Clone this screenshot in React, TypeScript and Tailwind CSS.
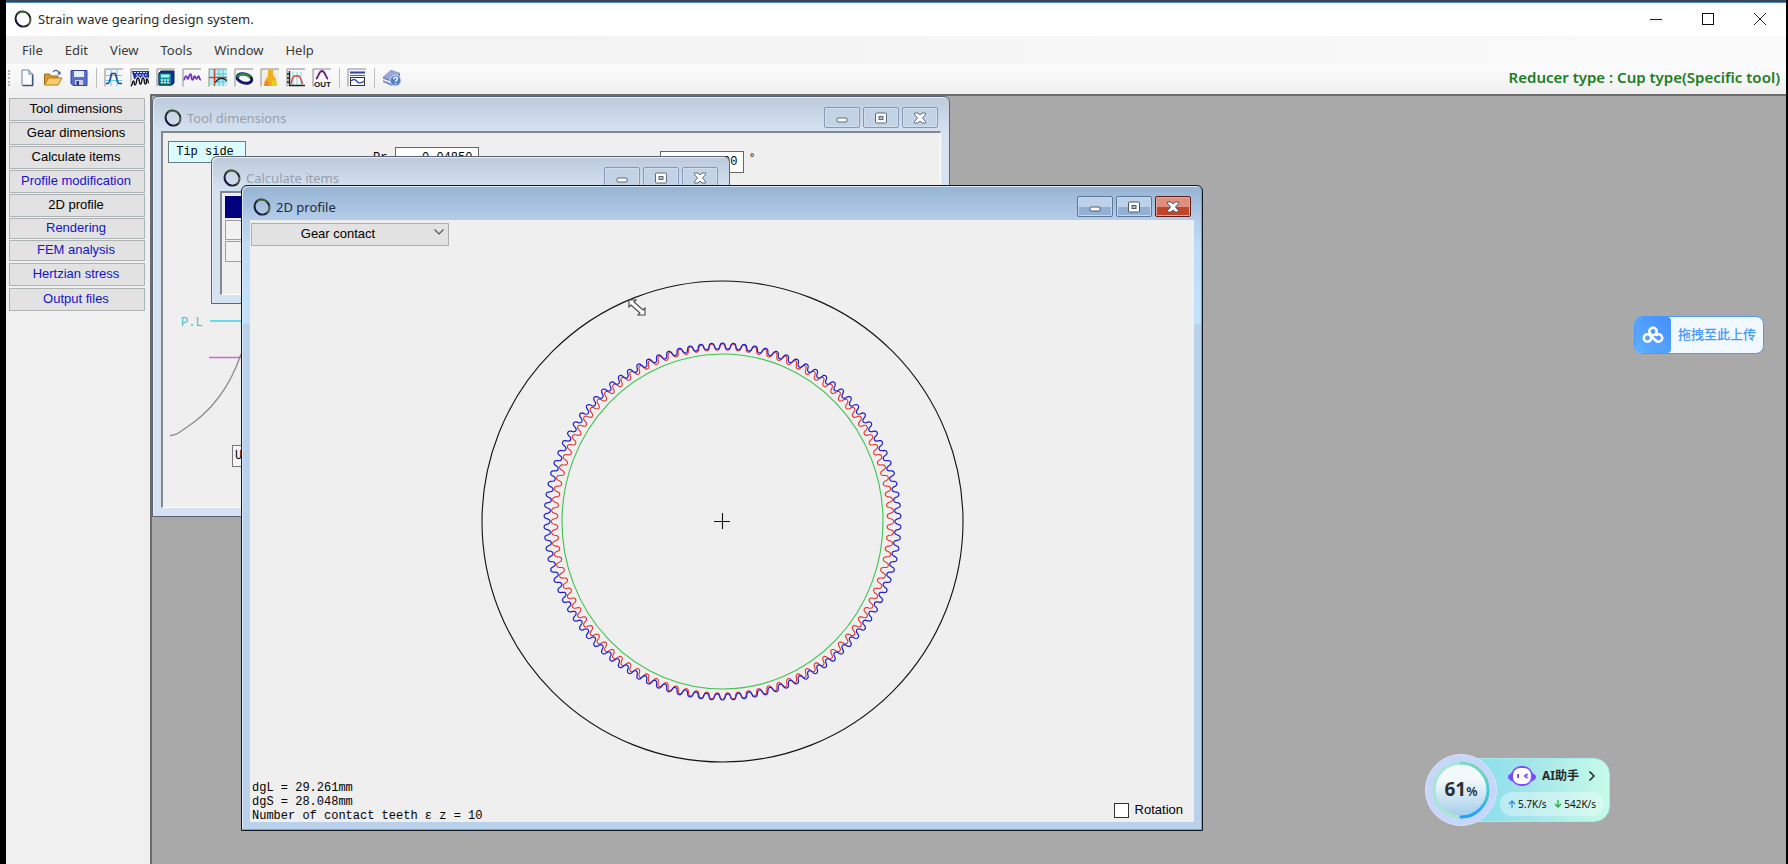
import React from 'react';

const sans = 'font-["Noto_Sans","Noto_Sans_CJK_SC",sans-serif]';
const gothic = 'font-["Liberation_Sans","Noto_Sans_CJK_JP",sans-serif]';
const mono = 'font-["Liberation_Mono","Noto_Sans_CJK_JP",monospace]';

const menus = ['File', 'Edit', 'View', 'Tools', 'Window', 'Help'];

const sideButtons = [
    { label: 'Tool dimensions', style: 'h-[23px] text-black' },
    { label: 'Gear dimensions', style: 'h-[23px] text-black' },
    { label: 'Calculate items', style: 'h-[23px] text-black' },
    { label: 'Profile modification', style: 'h-[23px] text-[#1414c8]' },
    { label: '2D profile', style: 'h-[23px] text-black' },
    { label: 'Rendering', style: 'h-[21px] text-[#1414c8]' },
    { label: 'FEM analysis', style: 'h-[21px] text-[#1414c8]' },
    { label: 'Hertzian stress', style: 'mt-px h-[23px] text-[#1414c8]' },
    { label: 'Output files', style: 'mt-px h-[23px] text-[#1414c8]' },
];

const RingIcon: React.FC = () => (
    <svg viewBox="0 0 18 18" className="w-[18px] h-[18px] shrink-0" fill="none">
        <ellipse cx="9" cy="9" rx="7.2" ry="7.8" transform="rotate(-35 9 9)" stroke="#20242c" strokeWidth="1.900" />
        <path d="M4 3.500C6.500 1.200 11 1 13.800 4" stroke="#3f6b35" strokeWidth="1.300" />
        <path d="M1.500 9c.3 3.600 3.100 7.200 6.700 7.700" stroke="#1d1650" strokeWidth="1.800" />
        <path d="M16.200 8c.3 2.500-.6 5-2.200 6.600" stroke="#8d8a52" strokeWidth="1" />
    </svg>
);

/* small framed picture used by most toolbar entries */
const Framed: React.FC<{ fill?: string; children: React.ReactNode }> = ({ fill = '#f4f6f8', children }) => (
    <svg viewBox="0 0 20 20" className="w-5 h-5" fill="none">
        <rect x="1" y="1" width="18" height="17" fill={fill} />
        <path d="M1 18.500V1h18" stroke="#8c8c8c" />
        {children}
    </svg>
);

const fileTools = [
    {
        label: 'New',
        icon: (
            <svg viewBox="0 0 20 20" className="w-5 h-5">
                <path d="M5 2h7l4 4v11.500H5z" fill="#fbfdff" stroke="#6f83a6" />
                <path d="M12 2v4h4" fill="#cfe0f4" stroke="#6f83a6" />
                <path d="M15.500 7v10.500H6" fill="none" stroke="#3f5478" strokeWidth="1.300" />
            </svg>
        ),
    },
    {
        label: 'Open',
        icon: (
            <svg viewBox="0 0 20 20" className="w-5 h-5">
                <path d="M1.500 17V6h5l1.500 2h7v3" fill="#d89b34" stroke="#a06c1c" />
                <path d="M1.500 17l4-7h13.500l-4 7z" fill="#f7cf6d" stroke="#b37c22" />
                <path d="M10 4c2-2.500 5-2 6 1" fill="none" stroke="#4a5f86" strokeWidth="1.200" />
                <path d="M17.500 3v3.500h-3.500z" fill="#4a5f86" />
            </svg>
        ),
    },
    {
        label: 'Save',
        icon: (
            <svg viewBox="0 0 20 20" className="w-5 h-5">
                <path d="M2 2.500h16v15H4l-2-2z" fill="#5a6fd0" stroke="#35469a" />
                <path d="M5 3h10v6H5z" fill="#e6edfb" />
                <path d="M6 12h8v5H6z" fill="#c9cfdf" />
                <path d="M7.500 13h2.500v4h-2.500z" fill="#2e3c82" />
            </svg>
        ),
    },
];

const viewTools = [
    {
        label: 'Tool profile',
        icon: (
            <Framed>
                <path d="M2 7.500h16M2 12.500h16M7 2v16M13 2v16" stroke="#5fd0e6" />
                <path d="M2 15.500h2c2 0 2.500-9 4-10h3c1.500 1 2 10 4 10h3" stroke="#28409a" strokeWidth="1.600" />
            </Framed>
        ),
    },
    {
        label: 'Gear profile',
        icon: (
            <Framed>
                <path d="M2 3h17v8H4z" fill="#1c2fae" />
                <path d="M4 4.500h13M6 7h11" stroke="#dfe6ff" strokeDasharray="2 1" />
                <path d="M1 18c1.500 0 1-5 2.500-5s0 4 1.500 4c2 0 1-7 3-7s.5 6 2.500 6 .5-6 2.500-6 .5 6 2.500 6 0-5 1.500-5 .5 4 2 4" stroke="#f4f6f8" strokeWidth="3.500" />
                <path d="M1 18c1.500 0 1-5 2.500-5s0 4 1.500 4c2 0 1-7 3-7s.5 6 2.500 6 .5-6 2.500-6 .5 6 2.500 6 0-5 1.500-5 .5 4 2 4" stroke="#111" strokeWidth="1.400" />
            </Framed>
        ),
    },
    {
        label: 'Calculate',
        icon: (
            <Framed>
                <path d="M3 5l2-2h13v12l-2 2H3z" fill="#17309c" stroke="#06303f" />
                <path d="M3 5h12.500v12H3z" fill="#1593a6" stroke="#06303f" />
                <path d="M5 6.500h8.500v3H5z" fill="#a8f2e6" />
                <path d="M5 12h9M5 14.500h9" stroke="#e5f7ff" strokeWidth="1.500" strokeDasharray="2 1" />
            </Framed>
        ),
    },
    {
        label: 'Modification',
        icon: (
            <Framed>
                <path d="M1.500 12c1.500 0 1-4 2.500-4s1 3 2 3 1-5 2.500-5 .5 6 2 6 1-4 2-4 1 3 2 3 1-3 2-3 .5 4 2.500 4" stroke="#7029cc" strokeWidth="1.700" />
            </Framed>
        ),
    },
    {
        label: '2D profile',
        icon: (
            <Framed fill="#b9eff5">
                <path d="M11 2v16M15 2v16M7 14h12M7 6h12" stroke="#4fc8dc" />
                <path d="M1 9.500h18M6.500 1v17" stroke="#d0452a" strokeWidth="1.500" />
                <path d="M7 14c2 0 2-3 5-3.500h3c2 .5 2 1.500 4 2" stroke="#222" strokeWidth="1.500" />
            </Framed>
        ),
    },
    {
        label: 'Rendering',
        icon: (
            <Framed>
                <ellipse cx="10.500" cy="10.500" rx="7.500" ry="4.500" transform="rotate(15 10.500 10.500)" stroke="#17156e" strokeWidth="3" />
                <path d="M3.500 9.500C5 5.500 12 5 16.500 9.500" stroke="#2d8a2f" strokeWidth="2.400" />
            </Framed>
        ),
    },
    {
        label: 'FEM analysis',
        icon: (
            <Framed fill="#f0efe6">
                <path d="M8 2h5v5l3 4 1 7H4l1-6 3-4z" fill="#f0b01e" />
                <path d="M4 18l1-5h4v5z" fill="#f5852a" />
                <path d="M12 12l4 1 1 5h-5z" fill="#e8d021" />
            </Framed>
        ),
    },
    {
        label: 'Hertzian stress',
        icon: (
            <Framed>
                <path d="M7 4v13M11 4v13M15 4v13" stroke="#7fdbe8" />
                <path d="M3.500 3v14.500H19M1 6h3M1 10h3M1 14h3" stroke="#222" strokeWidth="1.500" />
                <path d="M5 16c1-5 2-8 3.500-8h4C14 8 15 11 16.500 16" stroke="#d2442c" strokeWidth="1.500" />
            </Framed>
        ),
    },
    {
        label: 'Output files',
        icon: (
            <Framed>
                <path d="M4 11c2-1 3-8 6-8s4 7 6 8" stroke="#6b1d7c" strokeWidth="1.800" />
                <text x="2" y="18.500" fontSize="8" fontWeight="700" fill="#111" fontFamily="Liberation Sans, sans-serif">OUT</text>
            </Framed>
        ),
    },
];

const ChartTool = (
    <Framed>
        <path d="M3 4.500h15" stroke="#2c43b8" strokeWidth="2" />
        <path d="M3 7.500h15" stroke="#c43a3a" />
        <rect x="3.500" y="9.500" width="14" height="8" fill="#fff" stroke="#333" />
        <path d="M4 13c2-2 4-2 5.500 0s4 3 8 0" stroke="#2c43b8" strokeWidth="1.300" />
    </Framed>
);

const HelpTool = (
    <svg viewBox="0 0 20 20" className="w-5 h-5">
        <path d="M1 9l8-7 9 3v7l-8 6-9-4z" fill="#7484bf" />
        <path d="M1 9l8-7 9 3-8 7z" fill="#9aa7d6" />
        <path d="M1 11.500l9 3.500" stroke="#f2f4fb" strokeWidth="1.500" />
        <circle cx="13.500" cy="12.500" r="5.500" fill="#4f80d0" stroke="#dfe9fa" />
        <path d="M11.700 11.200c0-2.600 3.700-2.400 3.700-.2 0 1.300-1.800 1.400-1.800 2.700M13.600 15v1.200" fill="none" stroke="#fff" strokeWidth="1.400" />
    </svg>
);

const ToolButton: React.FC<{ label: string; children: React.ReactNode }> = ({ label, children }) => (
    <button type="button" aria-label={label} className="w-[26px] h-6 flex items-center justify-center shrink-0">
        {children}
    </button>
);

const Separator: React.FC = () => <span className="w-px h-5 mx-1 bg-[#bdbdbd] shrink-0" />;

const CaptionButtons: React.FC<{ active?: boolean }> = ({ active = false }) => {
    const base = active
        ? 'w-9 h-[21px] flex items-center justify-center rounded-[2px] border border-[#5d7797] bg-linear-to-b from-[#bdd2ea] from-50% to-[#91b0d3] to-50% shadow-[inset_0_0_0_1px_#c5d8ee]'
        : 'w-9 h-[21px] flex items-center justify-center rounded-[2px] border border-[#8499b5] bg-[#c3d3e6] shadow-[inset_0_0_0_1px_#d0deee]';
    const close = active
        ? 'w-9 h-[21px] flex items-center justify-center rounded-[2px] border border-[#5e1f18] bg-linear-to-b from-[#de8f7e] from-50% to-[#c1452b] to-50% shadow-[inset_0_0_0_1px_#e2a596]'
        : base;
    const ink = active ? '#4a5568' : '#5f6b7d';
    return (
        <div className="flex gap-[3px] pt-[10px] pr-[3px]">
            <button type="button" aria-label="Minimize" className={base}>
                <svg viewBox="0 0 14 12" className="w-[14px] h-3">
                    <rect x="2" y="6" width="10" height="4" rx="1" fill="#fff" stroke={ink} />
                </svg>
            </button>
            <button type="button" aria-label="Maximize" className={base}>
                <svg viewBox="0 0 14 12" className="w-[14px] h-3">
                    <rect x="1.500" y="1" width="11" height="10" rx="1" fill="#fff" stroke={ink} />
                    <rect x="5" y="4.500" width="4" height="3" fill="#aebfd3" stroke={ink} />
                </svg>
            </button>
            <button type="button" aria-label="Close" className={close}>
                <svg viewBox="0 0 14 12" className="w-[14px] h-3">
                    <path d="M1.500 1h3.500l2 2L9 1h3.500v1.500L9.500 6l3 3.500V11H9L7 9l-2 2H1.500V9.500l3-3.500-3-3.500z" fill="#fff" stroke={ink} />
                </svg>
            </button>
        </div>
    );
};

interface WindowProps {
    title: string;
    place: string;
    active?: boolean;
    children: React.ReactNode;
}

const ChildWindow: React.FC<WindowProps> = ({ title, place, active = false, children }) => (
    <section
        className={`absolute flex flex-col rounded-t-[6px] border px-2 pb-2 ${place} ${
            active
                ? 'border-[#101820] bg-[linear-gradient(#96b3d3_0px,#b4cdea_34px,#bfdcf7_60px,#c3e2fc_136px,#b9d1ea_140px)] shadow-[inset_-1px_-1px_0_#4cb8e0,inset_1px_1px_0_#dce9f7]'
                : 'border-[#5c6672] bg-[linear-gradient(#bccadb_0px,#d5e2f1_34px,#d5e2f1_100%)] shadow-[inset_1px_1px_0_#e4edf7]'
        }`}
    >
        <header className="h-[34px] shrink-0 flex items-start justify-between">
            <div className="flex items-center gap-[5px] pl-[3px] h-[42px]">
                <RingIcon />
                <h2 className={`${sans} text-[13px] leading-5 whitespace-nowrap ${active ? 'text-[#1c2a3c]' : 'text-[#97a0ad]'}`}>{title}</h2>
            </div>
            <CaptionButtons active={active} />
        </header>
        {children}
    </section>
);

const gearPath = (teeth: number, rx: number, ry: number, amp: number) => {
    const steps = teeth * 16;
    let d = '';
    for (let i = 0; i <= steps; i++) {
        const t = (i / 16) * Math.PI * 2;
        // tangential term rounds out the tip and root of each tooth
        const a = (t + 0.28 * Math.sin(2 * t)) / teeth;
        const r = amp * Math.cos(t);
        const x = 472.5 + (rx + r) * Math.sin(a);
        const y = 301.5 - (ry + r) * Math.cos(a);
        d += `${i ? 'L' : 'M'}${x.toFixed(2)} ${y.toFixed(2)}`;
    }
    return d + 'Z';
};

const GearDrawing: React.FC = () => (
    <svg viewBox="0 0 944 602" className="absolute inset-0 w-full h-full" fill="none" strokeWidth="1.100">
        <circle cx="472.500" cy="301.500" r="240.500" stroke="#111" />
        <ellipse cx="472.500" cy="301.500" rx="160.500" ry="167.500" stroke="#3fc04f" />
        <path d={gearPath(100, 168, 174.5, 3.2)} stroke="#e0342c" />
        <path d={gearPath(102, 175.5, 175.5, 3)} stroke="#2020c8" strokeWidth="1.200" />
        <path d="M464 301.500h16M472.500 293v16" stroke="#111" />
        <path d="M379 80h7l-2 2 9 8 2-2v7h-7l2-2-9-8-2 2z" fill="#fff" stroke="#444" />
    </svg>
);

const ToolDimensions: React.FC = () => (
    <div className={`flex-1 border-t-2 border-l-2 border-[#84888e] border-r border-b border-r-white border-b-white bg-[#efefef] ${mono} text-[12px] overflow-hidden`}>
        <div className="flex items-start h-[170px] pt-2 pl-[5px]">
            <span className="w-[78px] h-[22px] border border-[#6d7c80] bg-[#dcfdff] pr-1 text-center leading-5 text-black">Tip side</span>
            <label htmlFor="pr" className="ml-[127px] pt-[7px] pr-2 leading-5">Pr</label>
            <input id="pr" defaultValue="0.04850" className="mt-[6px] w-[84px] h-[22px] border border-[#666] bg-white px-[6px] text-right" />
            <input aria-label="Angle" defaultValue="20.000" className="ml-[181px] mt-[10px] w-[84px] h-[22px] border border-[#666] bg-white px-[6px] text-right" />
            <span className="pl-1 pt-2 leading-5">°</span>
        </div>
        <svg viewBox="0 0 100 140" className="w-[100px] h-[140px]" fill="none">
            <text x="18" y="23" fontSize="12" fill="#3dbdd0">P.L</text>
            <path d="M47 18h53" stroke="#3ed3e6" strokeWidth="1.500" />
            <path d="M46 54.500h54" stroke="#dd5fd6" strokeWidth="1.500" />
            <path d="M7 132.500c7 0 9-3 15-7C40 114 64 93 78 51" stroke="#8c8c8c" strokeWidth="1.300" />
        </svg>
        <button type="button" className="ml-[69px] mt-[2px] w-20 h-[22px] border border-[#777] bg-[#f4f4f4] pl-[2px] text-left">Update</button>
    </div>
);

const CalculateItems: React.FC = () => (
    <div className="flex-1 border-t-2 border-l-2 border-[#84888e] border-r border-b border-r-white border-b-white bg-[#efefef] p-[3px]">
        <div className="h-[22px] bg-[#00007f]" />
        <div className="mt-[2px] h-5 border border-[#a0a0a0] bg-[#f1f1f1]" />
        <div className="mt-[1px] h-[21px] border border-[#a0a0a0] bg-[#f1f1f1]" />
    </div>
);

const Profile2D: React.FC = () => (
    <div className="relative flex-1 flex flex-col justify-between bg-[#efefef]">
        <GearDrawing />
        <div className="relative mx-px w-[198px]">
            <select aria-label="View" className={`${gothic} appearance-none w-full h-[23px] border border-[#b0b0b0] bg-[#e2e2e2] pr-6 pb-[2px] text-[13px] text-center text-black`}>
                <option>Gear contact</option>
            </select>
            <svg viewBox="0 0 10 6" className="absolute right-[5px] top-[9px] w-[10px] h-[6px] pointer-events-none" fill="none">
                <path d="M.5.5L5 5 9.500.5" stroke="#555" strokeWidth="1.200" />
            </svg>
        </div>
        <footer className="relative flex justify-between items-end pl-[2px]">
            <div className={`${mono} -mb-px text-[12px] leading-[14px] text-black whitespace-pre`}>
                <p>dgL = 29.261mm</p>
                <p>dgS = 28.048mm</p>
                <p>Number of contact teeth ε z = 10</p>
            </div>
            <label className={`${gothic} flex items-center gap-[6px] pr-[11px] pb-1 text-[13px] leading-4 text-black`}>
                <input type="checkbox" className="appearance-none w-[15px] h-[15px] border border-[#333] bg-white" />
                Rotation
            </label>
        </footer>
    </div>
);

const UploadDrop: React.FC = () => (
    <button type="button" className={`absolute right-[22px] top-[220px] w-[130px] h-[38px] flex items-stretch rounded-lg border border-[#4a98fb] bg-[#f1f8ff] overflow-hidden ${sans}`}>
        <span className="w-9 flex items-center justify-center rounded-r-[4px] bg-linear-to-tr from-[#5fb0ff] to-[#448dfd]">
            <svg viewBox="0 0 22 18" className="w-[22px] h-[18px]" fill="none" stroke="#fff" strokeWidth="2.600">
                <circle cx="11" cy="5.500" r="3.700" />
                <circle cx="5.500" cy="12" r="3.700" />
                <path d="M13.800 9.500a3.700 3.700 0 1 1 0 5L8.500 9.800" />
            </svg>
        </span>
        <span className="flex-1 flex items-center justify-center text-[13px] font-medium text-[#459afc]">拖拽至此上传</span>
    </button>
);

const Assistant: React.FC = () => (
    <div className={`absolute right-[176px] bottom-[38px] flex items-center ${sans}`}>
        <div className="relative z-10 w-[72px] h-[72px] rounded-full border border-[#dbe4fc] bg-[#c6d7fa] flex items-center justify-center">
            <svg viewBox="0 0 72 72" className="absolute -inset-px w-[72px] h-[72px]" fill="none">
                <defs>
                    <linearGradient id="ball" x1="0" y1="0" x2="0" y2="1">
                        <stop offset="0.300" stopColor="#f3f9fb" />
                        <stop offset="1" stopColor="#a3cdea" />
                    </linearGradient>
                    <linearGradient id="arc" x1="0" y1="0" x2="0" y2="1">
                        <stop offset="0" stopColor="#7adcb8" />
                        <stop offset="0.600" stopColor="#45c6d2" />
                        <stop offset="1" stopColor="#1ea0fb" />
                    </linearGradient>
                </defs>
                <circle cx="36" cy="36" r="26" fill="url(#ball)" />
                <path d="M36 63a27 27 0 0 1 0-54" stroke="#a7e6cf" strokeWidth="3" />
                <path d="M36 9a27 27 0 0 1 0 54" stroke="url(#arc)" strokeWidth="3" strokeLinecap="round" />
            </svg>
            <p className="relative flex items-baseline font-bold text-[#2a2f33] text-[19px] leading-6">
                61<span className="text-[13px] font-semibold">%</span>
            </p>
        </div>
        <div className="-ml-14 w-[169px] h-16 rounded-2xl border border-[#a5ecec] bg-linear-to-r from-[#6fdcf0] via-[#a3e4ea] to-[#c5fbe8] pl-[58px] pr-[5px] pt-[6px] flex flex-col justify-between pb-[5px]">
            <div className="flex items-center gap-[6px] pl-2">
                <svg viewBox="0 0 28 22" className="w-7 h-[22px]">
                    <ellipse cx="14" cy="12" rx="14" ry="6" fill="#7c4dff" />
                    <rect x="3" y="1" width="22" height="20" rx="10" fill="#7c4dff" />
                    <rect x="5" y="3" width="18" height="16" rx="7" fill="#fff" />
                    <path d="M10 9v4M19.500 9L17 11l2.500 2" stroke="#7c4dff" strokeWidth="2" fill="none" />
                </svg>
                <span className="text-[12px] leading-5 font-bold text-[#25292e]">AI助手</span>
                <svg viewBox="0 0 8 12" className="ml-[3px] w-2 h-3" fill="none">
                    <path d="M1.500 1.500L6 6l-4.500 4.500" stroke="#222" strokeWidth="1.500" />
                </svg>
            </div>
            <div className="h-6 rounded-full bg-white/35 flex items-center justify-between px-2 font-['Open_Sans',sans-serif] text-[10px] text-black whitespace-nowrap">
                <span className="flex items-center gap-[2px]">
                    <svg viewBox="0 0 8 8" className="w-2 h-2" fill="none"><path d="M4 8V1M1 4l3-3 3 3" stroke="#2f8df5" strokeWidth="1.300" /></svg>
                    5.7K/s
                </span>
                <span className="flex items-center gap-[2px]">
                    <svg viewBox="0 0 8 8" className="w-2 h-2" fill="none"><path d="M4 0v7M1 4l3 3 3-3" stroke="#16b53c" strokeWidth="1.300" /></svg>
                    542K/s
                </span>
            </div>
        </div>
    </div>
);

const App: React.FC = () => {
    return (
        <div className="h-screen flex flex-col bg-black pl-[6px] pr-[2px] overflow-hidden">
            <div className="h-[3px] shrink-0 bg-[#3a4654] border-b border-[#4a86c8]" />

            {/* Title bar */}
            <header className={`h-[33px] shrink-0 flex items-center justify-between bg-white pl-2 pb-[2px] ${sans}`}>
                <div className="flex items-center gap-[6px]">
                    <RingIcon />
                    <h1 className="text-[13px] leading-5 text-[#2b2b2b]">Strain wave gearing design system.</h1>
                </div>
                <div className="flex">
                    <button type="button" aria-label="Minimize" className="w-[52px] h-8 flex items-center justify-center">
                        <svg viewBox="0 0 12 12" className="w-3 h-3"><path d="M0 6.500h12" stroke="#222" /></svg>
                    </button>
                    <button type="button" aria-label="Maximize" className="w-[52px] h-8 flex items-center justify-center">
                        <svg viewBox="0 0 12 12" className="w-3 h-3"><rect x=".5" y=".5" width="11" height="11" fill="none" stroke="#111" /></svg>
                    </button>
                    <button type="button" aria-label="Close" className="w-[52px] h-8 flex items-center justify-center">
                        <svg viewBox="0 0 12 12" className="w-3 h-3"><path d="M0 0l12 12M12 0L0 12" stroke="#222" /></svg>
                    </button>
                </div>
            </header>

            {/* Menu */}
            <nav className={`h-7 shrink-0 flex items-center bg-linear-to-r from-[#f0f0f0] to-[#fafafa] pl-[5px] ${sans}`}>
                {menus.map((menu) => (
                    <button key={menu} type="button" className="h-7 px-[11px] text-[13px] leading-5 text-[#3a3a3a]">
                        {menu}
                    </button>
                ))}
            </nav>

            {/* Toolbar */}
            <div className="h-[30px] shrink-0 flex items-center bg-linear-to-b from-[#fcfcfc] to-[#f0f0f0] pb-[2px]">
                <span className="ml-[2px] mr-1 h-4 border-l-2 border-dotted border-[#b5b5b5]" />
                {fileTools.map((tool) => (
                    <ToolButton key={tool.label} label={tool.label}>{tool.icon}</ToolButton>
                ))}
                <Separator />
                {viewTools.map((tool) => (
                    <ToolButton key={tool.label} label={tool.label}>{tool.icon}</ToolButton>
                ))}
                <Separator />
                <ToolButton label="Chart">{ChartTool}</ToolButton>
                <Separator />
                <ToolButton label="Help">{HelpTool}</ToolButton>
                <p className={`${sans} ml-auto pr-[6px] pb-[2px] text-[15px] leading-5 font-semibold text-[#1d7d24] whitespace-nowrap`}>
                    Reducer type : Cup type(Specific tool)
                </p>
            </div>

            <div className="flex-1 min-h-0 flex">
                <aside className={`w-36 shrink-0 flex flex-col gap-px bg-[#f0f0f0] pt-1 pl-[3px] pr-[5px] ${gothic}`}>
                    {sideButtons.map((button) => (
                        <button
                            key={button.label}
                            type="button"
                            className={`shrink-0 border border-[#adb2b5] bg-[#e2e2e2] pb-px pr-[2px] text-[13px] leading-4 ${button.style}`}
                        >
                            {button.label}
                        </button>
                    ))}
                </aside>

                {/* MDI area */}
                <main className="relative flex-1 border-t-2 border-l-2 border-[#6c6c6c] bg-[#a9a9a9] overflow-hidden">
                    <ChildWindow title="Tool dimensions" place="left-0 top-0 w-[798px] h-[421px]">
                        <ToolDimensions />
                    </ChildWindow>
                    <ChildWindow title="Calculate items" place="left-[59px] top-[60px] w-[519px] h-[148px]">
                        <CalculateItems />
                    </ChildWindow>
                    <ChildWindow active title="2D profile" place="left-[89px] top-[89px] w-[962px] h-[646px]">
                        <Profile2D />
                    </ChildWindow>
                    <UploadDrop />
                    <Assistant />
                </main>
            </div>
        </div>
    );
};

export default App;
